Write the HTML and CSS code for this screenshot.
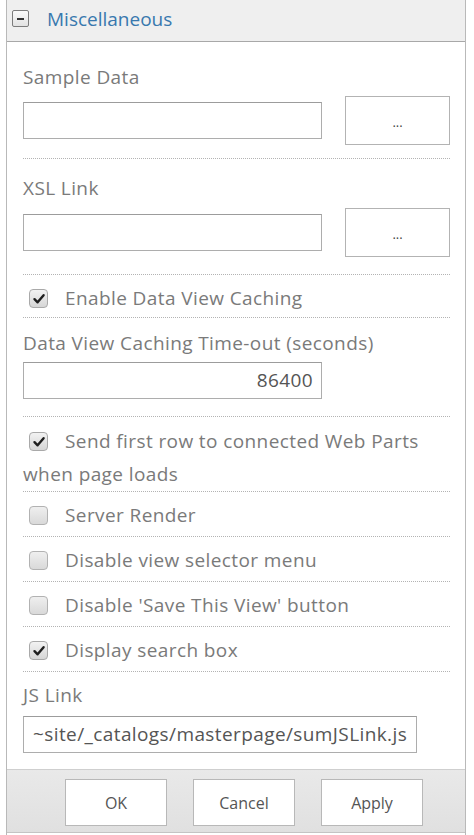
FILE: index.html
```html
<!DOCTYPE html>
<html lang="en">
<head>
<meta charset="utf-8">
<title>Miscellaneous</title>
<link rel="stylesheet" href="styles.css">
</head>
<body>
<div class="panel">
  <div class="header">
    <span class="toggle"><span class="bar"></span></span>
    <span class="title">Miscellaneous</span>
  </div>
  <div class="content">
    <div class="sec sec-first">
      <div class="label">Sample Data</div>
      <div class="pick-row">
        <div class="box box-pick"></div>
        <div class="btn-browse">...</div>
      </div>
    </div>
    <div class="sec sec-xsl">
      <div class="label">XSL Link</div>
      <div class="pick-row">
        <div class="box box-pick"></div>
        <div class="btn-browse">...</div>
      </div>
    </div>
    <div class="sec check check-tight">
      <span class="cb on"><svg viewBox="0 0 18 18" width="18" height="18"><path d="M4.5 9.2 L7.6 12.3 L13.6 5.2" fill="none" stroke="#1e1e1e" stroke-width="2.4" stroke-linecap="round" stroke-linejoin="round"/></svg></span>Enable Data View Caching
    </div>
    <div class="sec sec-timeout">
      <div class="label">Data View Caching Time-out (seconds)</div>
      <div class="box box-num">86400</div>
    </div>
    <div class="sec check check-wrap">
      <span class="cb on"><svg viewBox="0 0 18 18" width="18" height="18"><path d="M4.5 9.2 L7.6 12.3 L13.6 5.2" fill="none" stroke="#1e1e1e" stroke-width="2.4" stroke-linecap="round" stroke-linejoin="round"/></svg></span>Send first row to connected Web Parts when page loads
    </div>
    <div class="sec check">
      <span class="cb"></span>Server Render
    </div>
    <div class="sec check">
      <span class="cb"></span>Disable view selector menu
    </div>
    <div class="sec check">
      <span class="cb"></span>Disable 'Save This View' button
    </div>
    <div class="sec check">
      <span class="cb on"><svg viewBox="0 0 18 18" width="18" height="18"><path d="M4.5 9.2 L7.6 12.3 L13.6 5.2" fill="none" stroke="#1e1e1e" stroke-width="2.4" stroke-linecap="round" stroke-linejoin="round"/></svg></span>Display search box
    </div>
    <div class="sec-js">
      <div class="label">JS Link</div>
      <div class="box box-js">~site/_catalogs/masterpage/sumJSLink.js</div>
    </div>
  </div>
  <div class="footer">
    <div class="fbtn">OK</div>
    <div class="fbtn">Cancel</div>
    <div class="fbtn">Apply</div>
  </div>
</div>
</body>
</html>
```

FILE: styles.css
```css
* { box-sizing: border-box; }

html, body {
  margin: 0;
  padding: 0;
  background: #ffffff;
}

body {
  font-family: "Open Sans", "Liberation Sans", sans-serif;
  font-size: 19px;
  letter-spacing: 0.4px;
  color: #7a7a7a;
}

.panel {
  margin-left: 6px;
  width: 460px;
  border-left: 1px solid #b9b9b9;
  border-right: 1px solid #b9b9b9;
  padding-bottom: 2px;
}

.header {
  height: 42px;
  background: #efefef;
  border-bottom: 1px solid #a8a8a8;
  display: flex;
  align-items: center;
  padding-left: 5px;
}

.toggle {
  width: 17px;
  height: 17px;
  border: 1px solid #7c7c7c;
  border-radius: 2px;
  background: linear-gradient(#fafafa, #e2e2e2);
  display: flex;
  align-items: center;
  justify-content: center;
  margin-top: -4px;
}

.toggle .bar {
  width: 7px;
  height: 2px;
  background: #333;
}

.title {
  margin-left: 18px;
  font-size: 19px;
  letter-spacing: 0;
  color: #3878ae;
  margin-top: -4px;
}

.content {
  padding: 0 15px 0 16px;
}

.sec {
  border-bottom: 1px dotted #b3b3b3;
}

.label {
  line-height: 24px;
  height: 24px;
  white-space: nowrap;
}

.sec-first {
  padding: 23px 0 13px;
}

.sec-xsl {
  padding: 17px 0 17px;
}

.pick-row {
  display: flex;
  align-items: center;
  justify-content: space-between;
  margin-top: 7px;
  height: 49px;
}

.sec-xsl .pick-row {
  margin-top: 8px;
}

.box {
  border: 1px solid #adadad;
  border-top-color: #9c9c9c;
  background: #fff;
  height: 37px;
  color: #555;
  line-height: 35px;
}

.box-pick {
  width: 299px;
}

.btn-browse {
  width: 105px;
  height: 49px;
  border: 1px solid #b3b3b3;
  background: #fff;
  display: flex;
  align-items: center;
  justify-content: center;
  font-size: 13px;
  letter-spacing: 0;
  color: #444;
  padding-top: 2px;
}

.check {
  padding: 7px 0 4px;
  line-height: 33px;
}

.check-tight {
  padding: 7px 0 2px;
}

.check-wrap {
  padding: 8px 0 0;
}

.cb {
  display: inline-block;
  width: 19px;
  height: 19px;
  margin: 0 17px 0 6px;
  vertical-align: -3px;
  border: 1px solid #b2b2b2;
  border-radius: 4px;
  background: linear-gradient(#efefef, #d9d9d9);
}

.cb.on {
  background: linear-gradient(#f2f2f2, #d6d6d6);
  border-color: #a9a9a9;
}

.cb svg {
  display: block;
}

.sec-timeout {
  padding: 13px 0 17px;
}

.box-num {
  width: 299px;
  margin-top: 7px;
  text-align: right;
  padding-right: 8px;
}

.sec-js {
  padding: 11px 0 16px;
}

.box-js {
  width: 394px;
  margin-top: 9px;
  padding-left: 9px;
  white-space: nowrap;
  overflow: hidden;
}

.footer {
  background: linear-gradient(#e9e9e9, #e0e0e0);
  border-top: 1px solid #cfcfcf;
  border-bottom: 1px solid #c4c4c4;
  padding: 9px 0 6px 58px;
  display: flex;
  gap: 26px;
}

.fbtn {
  width: 102px;
  height: 47px;
  border: 1px solid #b8b8b8;
  background: #fff;
  display: flex;
  align-items: center;
  justify-content: center;
  font-size: 16px;
  letter-spacing: 0;
  color: #555;
}
```
